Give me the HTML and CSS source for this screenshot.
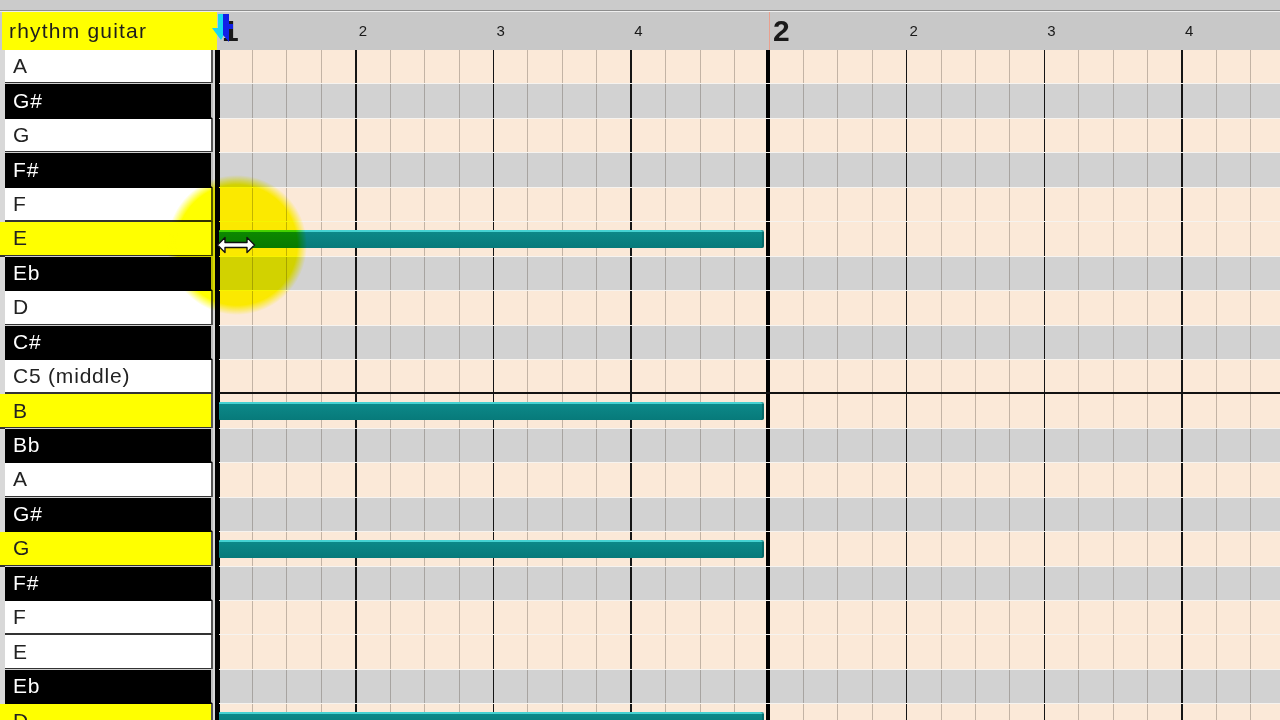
FILE: index.html
```html
<!DOCTYPE html>
<html>
<head>
<meta charset="utf-8">
<link rel="stylesheet" href="styles.css">
</head>
<body>
<div class="top-strip"></div>
<div class="ruler-row">
  <div class="track-name">rhythm guitar</div>
  <div class="ruler">
    <div class="beat bar"><span class="bar-num">1</span></div>
    <div class="beat"><span class="beat-num">2</span></div>
    <div class="beat"><span class="beat-num">3</span></div>
    <div class="beat"><span class="beat-num">4</span></div>
    <div class="beat bar mark"><span class="bar-num">2</span></div>
    <div class="beat"><span class="beat-num">2</span></div>
    <div class="beat"><span class="beat-num">3</span></div>
    <div class="beat"><span class="beat-num">4</span></div>
  </div>
</div>
<div class="main">
  <div class="keys">
    <div class="key white">A</div>
    <div class="key black">G#</div>
    <div class="key white">G</div>
    <div class="key black">F#</div>
    <div class="key white">F</div>
    <div class="key yellow">E</div>
    <div class="key black">Eb</div>
    <div class="key white">D</div>
    <div class="key black">C#</div>
    <div class="key white">C5 (middle)</div>
    <div class="key yellow">B</div>
    <div class="key black">Bb</div>
    <div class="key white">A</div>
    <div class="key black">G#</div>
    <div class="key yellow">G</div>
    <div class="key black">F#</div>
    <div class="key white">F</div>
    <div class="key white">E</div>
    <div class="key black">Eb</div>
    <div class="key yellow">D</div>
  </div>
  <div class="divider"></div>
  <div class="grid">
    <div class="row w"></div>
    <div class="row b"></div>
    <div class="row w"></div>
    <div class="row b"></div>
    <div class="row w"></div>
    <div class="row w"><div class="note"></div></div>
    <div class="row b"></div>
    <div class="row w"></div>
    <div class="row b"></div>
    <div class="row w midc"></div>
    <div class="row w"><div class="note"></div></div>
    <div class="row b"></div>
    <div class="row w"></div>
    <div class="row b"></div>
    <div class="row w"><div class="note"></div></div>
    <div class="row b"></div>
    <div class="row w"></div>
    <div class="row w"></div>
    <div class="row b"></div>
    <div class="row w"><div class="note"></div></div>
  </div>
</div>
<div class="spot"></div>
<svg class="cursor" width="40" height="18" viewBox="0 0 40 18">
  <path d="M1.5 9 L9 1.5 L9 6.5 L31 6.5 L31 1.5 L38.5 9 L31 16.5 L31 11.5 L9 11.5 L9 16.5 Z" fill="#fff" stroke="#111" stroke-width="1.4" stroke-linejoin="round"/>
</svg>
<svg class="marker" width="24" height="30" viewBox="0 0 24 30">
  <polygon points="7,1 13,1 13,15 17,15 10,27 1,15 7,15" fill="#19d8f0"/>
  <polygon points="12,1 18,1 18,11 22,11 22,16 18,16 18,29 12,22" fill="#1020e8"/>
</svg>
</body>
</html>
```
FILE: styles.css
```css
html, body {
  margin: 0;
  padding: 0;
}
body {
  width: 1280px;
  height: 720px;
  overflow: hidden;
  background: #c9c9c9;
  font-family: "Liberation Sans", Arial, sans-serif;
  position: relative;
}
.top-strip {
  height: 10px;
  background: #cbcbcb;
  border-bottom: 1px solid #8e8e8e;
  box-shadow: 0 1px 0 #efefef;
  margin-bottom: 1px;
}
.ruler-row {
  display: flex;
  height: 38px;
  background: #c8c8c8;
}
.track-name {
  flex: none;
  width: 215px;
  margin-left: 2px;
  background: #ffff00;
  color: #1e1e1e;
  font-size: 21px;
  letter-spacing: 1.2px;
  line-height: 38px;
  padding-left: 7px;
  box-sizing: border-box;
}
.ruler {
  flex: 1;
  margin-left: 1px;
  display: flex;
  overflow: hidden;
}
.beat {
  flex: none;
  width: 137.72px;
  padding-left: 3px;
  box-sizing: border-box;
  line-height: 38px;
  color: #1a1a1a;
}
.beat.bar {
  padding-left: 4px;
}
.beat.mark {
  box-shadow: inset 1px 0 0 #eaa08e;
}
.beat-num {
  font-size: 15px;
}
.bar-num {
  font-size: 30px;
  font-weight: bold;
}
.main {
  display: flex;
}
.keys {
  flex: none;
  width: 215px;
  background: #d8d8d8;
}
.key {
  height: 34.45px;
  box-sizing: border-box;
  margin-left: 5px;
  margin-right: 2px;
  padding-left: 8px;
  display: flex;
  align-items: center;
  font-size: 21px;
  letter-spacing: 0.8px;
  color: #222;
  border-bottom: 2px solid #333;
  border-right: 2px solid #555;
}
.key.white {
  background: #fff;
}
.key.black {
  background: #000;
  color: #fff;
  border-right-color: #bdbdbd;
  border-bottom-color: #000;
  box-shadow: 0 -1px 0 #cfcfcf;
}
.key.yellow {
  background: #ffff00;
  margin-left: 0;
  padding-left: 13px;
}
.divider {
  flex: none;
  width: 4px;
  background: #000;
}
.grid {
  flex: 1;
  overflow: hidden;
}
.row {
  display: flow-root;
  height: 34.45px;
  box-sizing: border-box;
  border-bottom: 1px solid #f6f3ef;
  background-image:
    repeating-linear-gradient(90deg, #000 0 4px, transparent 4px 550.88px),
    repeating-linear-gradient(90deg, #151515 0 1.6px, transparent 1.6px 137.72px),
    repeating-linear-gradient(90deg, rgba(80, 70, 60, 0.33) 0 1px, transparent 1px 34.43px);
  background-position: -3.4px 0, -1.8px 0, -1.5px 0;
  background-size: 1200px 100%;
  background-repeat: no-repeat;
}
.row.w {
  background-color: #fbe9d8;
}
.row.b {
  background-color: #d2d2d2;
}
.row.midc {
  border-bottom: 2px solid #111;
}
.note {
  margin-top: 8px;
  width: 545px;
  height: 18px;
  border-radius: 1px 2px 2px 1px;
  background: linear-gradient(to bottom, #45d2d2 0, #45d2d2 2px, #0c8888 2px, #077a7a 100%);
  box-shadow: inset -2px 0 0 rgba(0, 60, 60, 0.35);
}
.spot {
  position: absolute;
  left: 167px;
  top: 175px;
  width: 140px;
  height: 140px;
  border-radius: 50%;
  background: radial-gradient(circle closest-side, #ffff00 0, #ffff00 86%, rgba(255, 255, 0, 0) 100%);
  mix-blend-mode: multiply;
}
.cursor {
  position: absolute;
  left: 216px;
  top: 236px;
}
.marker {
  position: absolute;
  left: 211px;
  top: 13px;
}
```
